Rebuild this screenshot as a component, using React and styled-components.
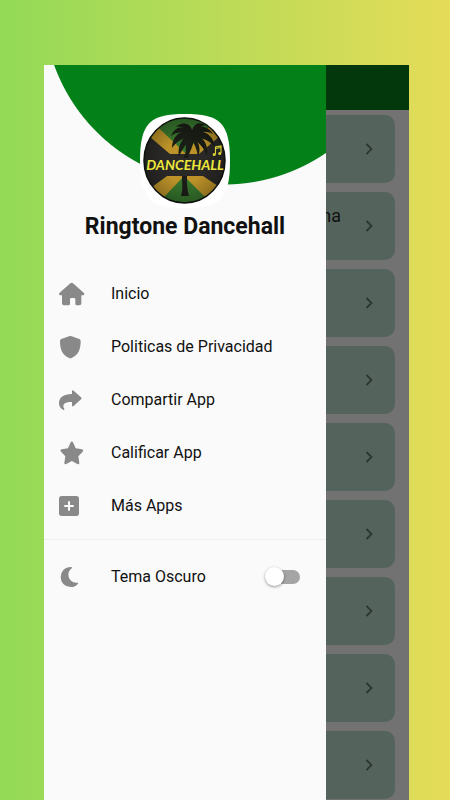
import React, { useState } from 'react';
import styled, { createGlobalStyle } from 'styled-components';

const GlobalStyle = createGlobalStyle`
  * {
    box-sizing: border-box;
  }

  body {
    margin: 0;
    font-family: Roboto, 'Liberation Sans', sans-serif;
    color: #111;
  }
`;

const Page = styled.div`
  min-height: 100vh;
  padding: 65px 41px 0 44px;
  display: grid;
  background: linear-gradient(90deg, #93da57 0%, #e5dc58 100%);
`;

const Phone = styled.div`
  display: grid;
  background: #727272;
`;

const Screen = styled.main`
  grid-area: 1 / 1;
`;

const AppBar = styled.header`
  height: 45px;
  background: #02380c;
`;

const RingtoneList = styled.ul`
  display: flex;
  flex-direction: column;
  gap: 9px;
  margin: 0;
  padding: 5px 14px 0;
  list-style: none;
`;

const RingtoneCard = styled.li`
  display: flex;
  justify-content: flex-end;
  gap: 22px;
  height: 68px;
  padding: 13px 20px 0 0;
  border-radius: 10px;
  background: #54645c;
`;

const RingtoneName = styled.span`
  font-size: 18px;
  line-height: 22px;
`;

const PlayButton = styled.button`
  display: flex;
  align-items: center;
  justify-content: center;
  width: 12px;
  height: 42px;
  padding: 0;
  border: 0;
  background: none;
  color: #2d3732;
`;

const Drawer = styled.nav`
  grid-area: 1 / 1;
  z-index: 1;
  width: calc(100% - 83px);
  background: #fafafa;
`;

const DrawerHeader = styled.div`
  display: flex;
  flex-direction: column;
  align-items: center;
  height: 202px;
  padding-top: 49px;
  background: radial-gradient(circle at 180px -61px, #048018 180px, #fafafa 181px);
`;

const Title = styled.h1`
  margin: 5px 0 0;
  font-size: 23px;
  line-height: 28px;
  font-weight: 700;
`;

const MenuList = styled.ul`
  margin: 0;
  padding: 0 0 7px;
  list-style: none;
  border-bottom: 1px solid #efefef;
`;

const MenuLink = styled.a`
  display: grid;
  grid-template-columns: 52px 1fr;
  align-items: center;
  height: 53px;
  padding: 0 15px;
  font-size: 16px;
  color: inherit;
  text-decoration: none;
`;

const ThemeRow = styled.label`
  display: grid;
  grid-template-columns: 52px 1fr auto;
  align-items: center;
  height: 53px;
  margin-top: 10px;
  padding: 0 26px 0 15px;
  font-size: 16px;
`;

const IconSvg = styled.svg`
  display: block;
  width: 26px;
  height: 24px;
  fill: #898989;
  stroke: #898989;
  stroke-width: 0;
  stroke-linejoin: round;
`;

const Switch = styled.input`
  appearance: none;
  display: flex;
  align-items: center;
  justify-content: ${props => (props.checked ? 'flex-end' : 'flex-start')};
  width: 33px;
  height: 14px;
  margin: 0;
  background: #a5a5a5;
  border-radius: 7px;

  &::before {
    content: '';
    flex: none;
    width: 19px;
    height: 19px;
    margin: 0 -2px;
    border-radius: 50%;
    background: #fff;
    box-shadow: 0 1px 3px rgba(0, 0, 0, 0.4);
  }
`;

const Icon = ({ children }) => (
  <IconSvg viewBox="0 0 78 72" aria-hidden="true">
    {children}
  </IconSvg>
);

const HomeIcon = () => (
  <Icon>
    <path d="M34 4Q38 0 42 4L74 32Q77 35 75 38Q74 40 71 40H67V64Q67 70 61 70H54Q49 70 49 65V52Q49 48 45 48H37Q33 48 33 52V65Q33 70 28 70H15Q9 70 9 64V40H5Q2 40 1 38Q-1 35 2 32Z" />
  </Icon>
);

const ShieldIcon = () => (
  <Icon>
    <path d="M30 4Q34 2 38 4L61 12Q65 14 65 18C65 42 59 59 39 68Q34 71 29 68C9 59 3 42 3 18Q3 14 7 12Z" />
  </Icon>
);

const ShareIcon = () => (
  <Icon>
    <path d="M39 10Q39 5 44 8L66 28Q70 31 66 34L44 54Q39 57 39 52V42C23 41 13 46 13 54Q13 59 16 63Q17 68 12 65C4 61 0 55 0 46C0 28 13 19 39 18Z" />
  </Icon>
);

const StarIcon = () => (
  <Icon>
    <path d="M35 4Q38.500 -1 42 4L50 22L69 25Q75 27 71 32L58 46L61 65Q61 72 55 69L38.500 60L22 69Q16 72 16 65L19 46L6 32Q2 27 8 25L27 22Z" />
  </Icon>
);

const PlusIcon = () => (
  <Icon>
    <rect y="6" width="60" height="60" rx="8" />
    <path d="M30 24V48M18 36H42" stroke="#fafafa" strokeWidth="6" strokeLinecap="round" />
  </Icon>
);

const MoonIcon = () => (
  <Icon>
    <path d="M36 6Q22 6 13 15Q5 24 5 36Q5 48 13 57Q22 66 35 66Q49 66 57 56Q59 53 55 53Q43 54 36 47Q28 40 28 29Q28 17 39 9Q41 7 36 6Z" />
  </Icon>
);

const menu = [
  { label: 'Inicio', MenuIcon: HomeIcon },
  { label: 'Politicas de Privacidad', MenuIcon: ShieldIcon },
  { label: 'Compartir App', MenuIcon: ShareIcon },
  { label: 'Calificar App', MenuIcon: StarIcon },
  { label: 'Más Apps', MenuIcon: PlusIcon }
];

const ringtones = ['', 'na', '', '', '', '', '', '', ''];

function Logo() {
  return (
    <svg width="94" height="94" viewBox="0 0 94 94" role="img" aria-label="Dancehall">
      <defs>
        <clipPath id="disc">
          <ellipse cx="46.500" cy="46.500" rx="40.500" ry="42.500" />
        </clipPath>
        <radialGradient id="shade">
          <stop offset="50%" stopColor="#000" stopOpacity="0" />
          <stop offset="100%" stopColor="#000" stopOpacity="0.25" />
        </radialGradient>
      </defs>
      <path d="M47 0C82 0 92 9 92 47S82 94 47 94 2 85 2 47 12 0 47 0Z" fill="#fff" />
      <g clipPath="url(#disc)">
        <rect width="94" height="94" fill="#bd9329" />
        <path d="M4 0L24 17L47 39L70 14L84 0Z M10 100L46 62L84 100Z" fill="#36752d" />
        <path d="M0 13L12 23L32 40H61L82 22L94 12V83L80 72L65 62H29L14 73L0 84Z" fill="#2a2928" />
        <path d="M44 62h5c0 8 0 14 2 20h-8c2-6 1-12 1-20Z" fill="#1c1c18" />
        <g fill="#1a1d15">
          <path d="M54 19C47 10 37 12 33 22C40 17 47 18 54 22Z" />
          <path d="M54 19C43 14 34 22 34 34C39 27 46 23 54 23Z" />
          <path d="M54 20C44 22 39 32 41 43C44 35 49 28 55 24Z" />
          <path d="M54 20C47 27 46 35 50 44C51 36 54 30 57 23Z" />
          <path d="M53 20C58 10 69 11 75 20C67 16 60 18 54 23Z" />
          <path d="M53 20C64 13 76 21 77 33C71 26 63 23 54 24Z" />
          <path d="M53 20C64 20 71 30 69 42C66 34 60 27 54 24Z" />
          <path d="M53 21C60 25 64 34 60 43C59 35 56 29 53 24Z" />
          <path d="M54 21C49 14 44 12 38 13C42 8 52 8 54 16C57 8 63 8 67 11C61 13 57 16 55 21Z" />
          <path d="M53 22C53 32 47 36 46 44H50C52 36 56 32 56 22Z" />
        </g>
        <ellipse cx="46.500" cy="46.500" rx="40.500" ry="42.500" fill="url(#shade)" />
      </g>
      <ellipse cx="46.500" cy="46.500" rx="40.500" ry="42.500" fill="none" stroke="#0c110c" strokeWidth="1.5" />
      <path d="M77.500 40V33L83 32V39M77.500 34.500L83 33.500" fill="none" stroke="#ddd736" strokeWidth="1.1" />
      <circle cx="76.200" cy="40.500" r="1.500" fill="#ddd736" />
      <circle cx="81.700" cy="39.500" r="1.500" fill="#ddd736" />
      <text x="47" y="56" textAnchor="middle" fontFamily="Lato, sans-serif" fontSize="14" fontStyle="italic" fontWeight="700" fill="#eee73b">
        DANCEHALL
      </text>
    </svg>
  );
}

function Chevron() {
  return (
    <svg width="8" height="12" viewBox="0 0 8 12" fill="none" stroke="currentColor" strokeWidth="1.8">
      <path d="M1.500 1L6.500 6L1.500 11" />
    </svg>
  );
}

function App() {
  const [dark, setDark] = useState(false);

  return (
    <Page>
      <GlobalStyle />
      <Phone>
        <Screen>
          <AppBar />
          <RingtoneList>
            {ringtones.map((name, index) => (
              <RingtoneCard key={index}>
                {name && <RingtoneName>{name}</RingtoneName>}
                <PlayButton aria-label="Abrir">
                  <Chevron />
                </PlayButton>
              </RingtoneCard>
            ))}
          </RingtoneList>
        </Screen>

        <Drawer>
          <DrawerHeader>
            <Logo />
            <Title>Ringtone Dancehall</Title>
          </DrawerHeader>
          <MenuList>
            {menu.map(({ label, MenuIcon }) => (
              <li key={label}>
                <MenuLink href="#">
                  <MenuIcon />
                  {label}
                </MenuLink>
              </li>
            ))}
          </MenuList>
          <ThemeRow>
            <MoonIcon />
            Tema Oscuro
            <Switch type="checkbox" role="switch" checked={dark} onChange={e => setDark(e.target.checked)} />
          </ThemeRow>
        </Drawer>
      </Phone>
    </Page>
  );
}

export default App;
